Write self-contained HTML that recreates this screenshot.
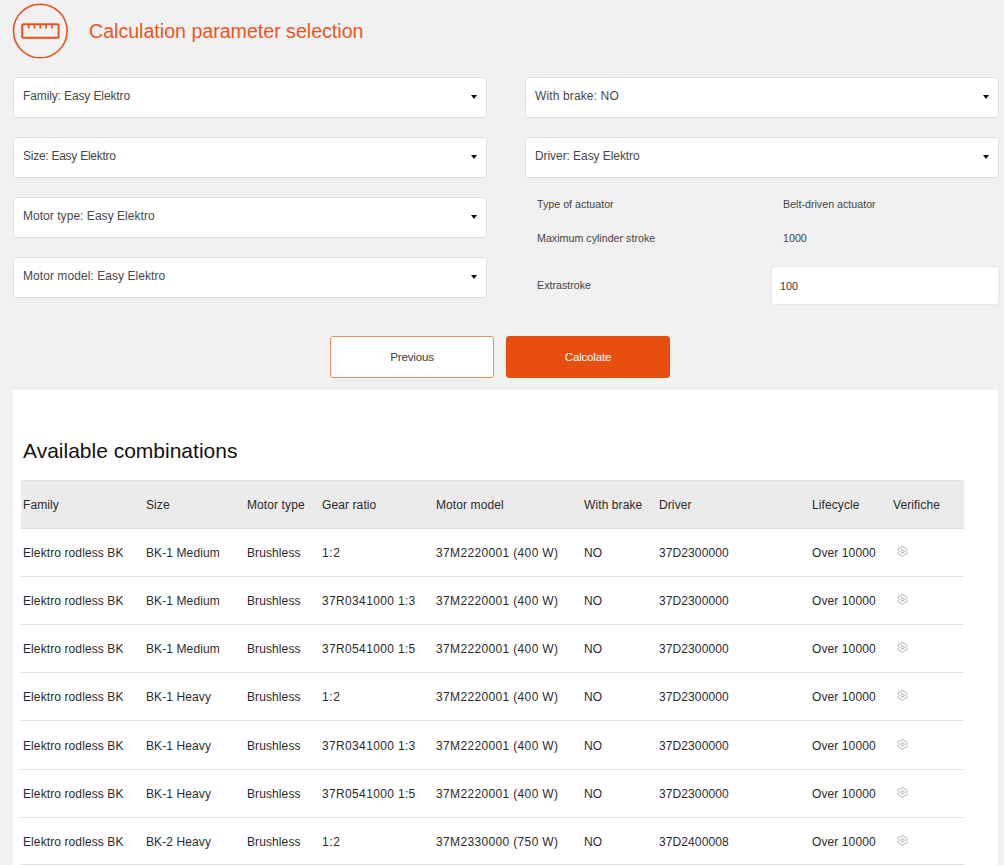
<!DOCTYPE html>
<html><head><meta charset="utf-8"><title>Calculation parameter selection</title>
<style>
*{box-sizing:border-box}
html,body{margin:0;padding:0}
body{width:1004px;height:865px;overflow:hidden;background:#f1f1f1;font-family:"Liberation Sans",sans-serif;position:relative;color:#333}
.abs{position:absolute}
.title{position:absolute;left:89px;top:19px;font-size:19.6px;line-height:24px;color:#e8561f;white-space:nowrap}
.sel{position:absolute;width:474px;height:41px;background:#fff;border:1px solid #dcdfe3;border-radius:3px}
.sel .t{position:absolute;left:9px;top:11px;font-size:12px;line-height:15px;color:#474747;white-space:nowrap;letter-spacing:-0.12px}
.sel .arr{position:absolute;right:9px;top:17px;width:0;height:0;border-left:3px solid transparent;border-right:3px solid transparent;border-top:4px solid #111}
.lbl{position:absolute;font-size:10.7px;line-height:13px;color:#444;white-space:nowrap}
.inp{position:absolute;left:771px;top:266px;width:228px;height:39px;background:#fff;border:1px solid #e6e8ea;border-radius:3px}
.inp .t{position:absolute;left:8px;top:13px;font-size:10.7px;line-height:13px;color:#333}
.btn{position:absolute;top:336px;width:164px;height:42px;border-radius:3px;font-size:11.6px;line-height:14px;text-align:center;padding-top:13px;letter-spacing:-0.2px}
.prev{left:330px;background:#fff;border:1px solid #ef8d66;color:#3a3a3a}
.calc{left:506px;background:#e84e0f;border:1px solid #e84e0f;color:#fff}
.panel{position:absolute;left:13px;top:390px;width:985px;height:500px;background:#fff}
.h2{position:absolute;left:23px;top:438px;font-size:21px;line-height:26px;color:#111;white-space:nowrap}
.thead{position:absolute;left:21px;top:480px;width:943px;height:49px;background:#ebebeb;border-top:1px solid #e2e2e2;border-bottom:1px solid #dedede}
.row{position:absolute;left:21px;width:943px;height:48px;border-bottom:1px solid #e2e2e2}
.c{position:absolute;font-size:12px;line-height:15px;color:#2a2a2a;white-space:nowrap;letter-spacing:0.1px}
.gear{position:absolute}
</style></head><body>

<svg class="abs" style="left:0;top:0" width="80" height="64" viewBox="0 0 80 64">
<circle cx="40.3" cy="31" r="26.8" fill="none" stroke="#e8521a" stroke-width="1.6"/>
<rect x="22.2" y="24.2" width="36.4" height="13.6" rx="1" fill="none" stroke="#e8521a" stroke-width="2"/>
<path d="M28.7 24v4.4M34.4 24v4.4M40.2 24v4.4M46 24v4.4M51.8 24v4.4" stroke="#e8521a" stroke-width="1.6"/>
</svg>
<div class="title">Calculation parameter selection</div>
<div class="sel" style="left:13px;top:77px"><span class="t" style="letter-spacing:-0.12px">Family: Easy Elektro</span><span class="arr"></span></div>
<div class="sel" style="left:13px;top:137px"><span class="t" style="letter-spacing:-0.26px">Size: Easy Elektro</span><span class="arr"></span></div>
<div class="sel" style="left:13px;top:197px"><span class="t" style="letter-spacing:0.04px">Motor type: Easy Elektro</span><span class="arr"></span></div>
<div class="sel" style="left:13px;top:257px"><span class="t" style="letter-spacing:0.06px">Motor model: Easy Elektro</span><span class="arr"></span></div>
<div class="sel" style="left:525px;top:77px"><span class="t" style="letter-spacing:0.13px">With brake: NO</span><span class="arr"></span></div>
<div class="sel" style="left:525px;top:137px"><span class="t" style="letter-spacing:-0.07px">Driver: Easy Elektro</span><span class="arr"></span></div>
<div class="lbl" style="left:537px;top:198px">Type of actuator</div>
<div class="lbl" style="left:783px;top:198px">Belt-driven actuator</div>
<div class="lbl" style="left:537px;top:232px">Maximum cylinder stroke</div>
<div class="lbl" style="left:783px;top:232px">1000</div>
<div class="lbl" style="left:537px;top:279px">Extrastroke</div>
<div class="inp"><span class="t">100</span></div>
<div class="btn prev">Previous</div>
<div class="btn calc">Calcolate</div>
<div class="panel"></div>
<div class="h2">Available combinations</div>
<div class="thead"></div>
<div class="c" style="left:23px;top:498px">Family</div>
<div class="c" style="left:146px;top:498px">Size</div>
<div class="c" style="left:247px;top:498px">Motor type</div>
<div class="c" style="left:322px;top:498px">Gear ratio</div>
<div class="c" style="left:436px;top:498px">Motor model</div>
<div class="c" style="left:584px;top:498px">With brake</div>
<div class="c" style="left:659px;top:498px">Driver</div>
<div class="c" style="left:812px;top:498px">Lifecycle</div>
<div class="c" style="left:893px;top:498px">Verifiche</div>
<div class="row" style="top:529px"></div>
<div class="c" style="left:23px;top:546px">Elektro rodless BK</div>
<div class="c" style="left:146px;top:546px">BK-1 Medium</div>
<div class="c" style="left:247px;top:546px">Brushless</div>
<div class="c" style="left:322px;top:546px;letter-spacing:0.6px">1:2</div>
<div class="c" style="left:436px;top:546px;letter-spacing:0.35px">37M2220001 (400 W)</div>
<div class="c" style="left:584px;top:546px">NO</div>
<div class="c" style="left:659px;top:546px">37D2300000</div>
<div class="c" style="left:812px;top:546px">Over 10000</div>
<div class="gear" style="left:896px;top:544px"><svg width="13" height="13" viewBox="-1 -0.85 13 13"><path fill="none" stroke="#a8a8a8" stroke-width="1" d="M9.35 5.50L9.35 5.25L9.38 4.99L9.49 4.71L9.80 4.35L10.07 3.95L10.11 3.59L10.02 3.27L9.87 2.98L9.69 2.70L9.46 2.46L9.13 2.32L8.65 2.35L8.18 2.44L7.88 2.40L7.64 2.29L7.43 2.17L7.21 2.04L7.00 1.89L6.81 1.64L6.65 1.20L6.44 0.76L6.15 0.55L5.83 0.47L5.50 0.45L5.17 0.47L4.85 0.55L4.56 0.76L4.35 1.20L4.19 1.64L4.00 1.89L3.79 2.04L3.58 2.17L3.36 2.29L3.12 2.40L2.82 2.44L2.35 2.35L1.87 2.32L1.54 2.46L1.31 2.70L1.13 2.98L0.98 3.27L0.89 3.59L0.93 3.95L1.20 4.35L1.51 4.71L1.62 4.99L1.65 5.25L1.65 5.50L1.65 5.75L1.62 6.01L1.51 6.29L1.20 6.65L0.93 7.05L0.89 7.41L0.98 7.73L1.13 8.02L1.31 8.30L1.54 8.54L1.87 8.68L2.35 8.65L2.82 8.56L3.12 8.60L3.36 8.71L3.57 8.83L3.79 8.96L4.00 9.11L4.19 9.36L4.35 9.80L4.56 10.24L4.85 10.45L5.17 10.53L5.50 10.55L5.83 10.53L6.15 10.45L6.44 10.24L6.65 9.80L6.81 9.36L7.00 9.11L7.21 8.96L7.43 8.83L7.64 8.71L7.88 8.60L8.18 8.56L8.65 8.65L9.13 8.68L9.46 8.54L9.69 8.30L9.87 8.03L10.02 7.73L10.11 7.41L10.07 7.05L9.80 6.65L9.49 6.29L9.38 6.01L9.35 5.75Z"/><circle cx="5.5" cy="5.5" r="1.6" fill="none" stroke="#a8a8a8" stroke-width="1"/></svg></div>
<div class="row" style="top:577px"></div>
<div class="c" style="left:23px;top:594px">Elektro rodless BK</div>
<div class="c" style="left:146px;top:594px">BK-1 Medium</div>
<div class="c" style="left:247px;top:594px">Brushless</div>
<div class="c" style="left:322px;top:594px;letter-spacing:0.35px">37R0341000 1:3</div>
<div class="c" style="left:436px;top:594px;letter-spacing:0.35px">37M2220001 (400 W)</div>
<div class="c" style="left:584px;top:594px">NO</div>
<div class="c" style="left:659px;top:594px">37D2300000</div>
<div class="c" style="left:812px;top:594px">Over 10000</div>
<div class="gear" style="left:896px;top:592px"><svg width="13" height="13" viewBox="-1 -0.85 13 13"><path fill="none" stroke="#a8a8a8" stroke-width="1" d="M9.35 5.50L9.35 5.25L9.38 4.99L9.49 4.71L9.80 4.35L10.07 3.95L10.11 3.59L10.02 3.27L9.87 2.98L9.69 2.70L9.46 2.46L9.13 2.32L8.65 2.35L8.18 2.44L7.88 2.40L7.64 2.29L7.43 2.17L7.21 2.04L7.00 1.89L6.81 1.64L6.65 1.20L6.44 0.76L6.15 0.55L5.83 0.47L5.50 0.45L5.17 0.47L4.85 0.55L4.56 0.76L4.35 1.20L4.19 1.64L4.00 1.89L3.79 2.04L3.58 2.17L3.36 2.29L3.12 2.40L2.82 2.44L2.35 2.35L1.87 2.32L1.54 2.46L1.31 2.70L1.13 2.98L0.98 3.27L0.89 3.59L0.93 3.95L1.20 4.35L1.51 4.71L1.62 4.99L1.65 5.25L1.65 5.50L1.65 5.75L1.62 6.01L1.51 6.29L1.20 6.65L0.93 7.05L0.89 7.41L0.98 7.73L1.13 8.02L1.31 8.30L1.54 8.54L1.87 8.68L2.35 8.65L2.82 8.56L3.12 8.60L3.36 8.71L3.57 8.83L3.79 8.96L4.00 9.11L4.19 9.36L4.35 9.80L4.56 10.24L4.85 10.45L5.17 10.53L5.50 10.55L5.83 10.53L6.15 10.45L6.44 10.24L6.65 9.80L6.81 9.36L7.00 9.11L7.21 8.96L7.43 8.83L7.64 8.71L7.88 8.60L8.18 8.56L8.65 8.65L9.13 8.68L9.46 8.54L9.69 8.30L9.87 8.03L10.02 7.73L10.11 7.41L10.07 7.05L9.80 6.65L9.49 6.29L9.38 6.01L9.35 5.75Z"/><circle cx="5.5" cy="5.5" r="1.6" fill="none" stroke="#a8a8a8" stroke-width="1"/></svg></div>
<div class="row" style="top:625px"></div>
<div class="c" style="left:23px;top:642px">Elektro rodless BK</div>
<div class="c" style="left:146px;top:642px">BK-1 Medium</div>
<div class="c" style="left:247px;top:642px">Brushless</div>
<div class="c" style="left:322px;top:642px;letter-spacing:0.35px">37R0541000 1:5</div>
<div class="c" style="left:436px;top:642px;letter-spacing:0.35px">37M2220001 (400 W)</div>
<div class="c" style="left:584px;top:642px">NO</div>
<div class="c" style="left:659px;top:642px">37D2300000</div>
<div class="c" style="left:812px;top:642px">Over 10000</div>
<div class="gear" style="left:896px;top:640px"><svg width="13" height="13" viewBox="-1 -0.85 13 13"><path fill="none" stroke="#a8a8a8" stroke-width="1" d="M9.35 5.50L9.35 5.25L9.38 4.99L9.49 4.71L9.80 4.35L10.07 3.95L10.11 3.59L10.02 3.27L9.87 2.98L9.69 2.70L9.46 2.46L9.13 2.32L8.65 2.35L8.18 2.44L7.88 2.40L7.64 2.29L7.43 2.17L7.21 2.04L7.00 1.89L6.81 1.64L6.65 1.20L6.44 0.76L6.15 0.55L5.83 0.47L5.50 0.45L5.17 0.47L4.85 0.55L4.56 0.76L4.35 1.20L4.19 1.64L4.00 1.89L3.79 2.04L3.58 2.17L3.36 2.29L3.12 2.40L2.82 2.44L2.35 2.35L1.87 2.32L1.54 2.46L1.31 2.70L1.13 2.98L0.98 3.27L0.89 3.59L0.93 3.95L1.20 4.35L1.51 4.71L1.62 4.99L1.65 5.25L1.65 5.50L1.65 5.75L1.62 6.01L1.51 6.29L1.20 6.65L0.93 7.05L0.89 7.41L0.98 7.73L1.13 8.02L1.31 8.30L1.54 8.54L1.87 8.68L2.35 8.65L2.82 8.56L3.12 8.60L3.36 8.71L3.57 8.83L3.79 8.96L4.00 9.11L4.19 9.36L4.35 9.80L4.56 10.24L4.85 10.45L5.17 10.53L5.50 10.55L5.83 10.53L6.15 10.45L6.44 10.24L6.65 9.80L6.81 9.36L7.00 9.11L7.21 8.96L7.43 8.83L7.64 8.71L7.88 8.60L8.18 8.56L8.65 8.65L9.13 8.68L9.46 8.54L9.69 8.30L9.87 8.03L10.02 7.73L10.11 7.41L10.07 7.05L9.80 6.65L9.49 6.29L9.38 6.01L9.35 5.75Z"/><circle cx="5.5" cy="5.5" r="1.6" fill="none" stroke="#a8a8a8" stroke-width="1"/></svg></div>
<div class="row" style="top:673px"></div>
<div class="c" style="left:23px;top:690px">Elektro rodless BK</div>
<div class="c" style="left:146px;top:690px">BK-1 Heavy</div>
<div class="c" style="left:247px;top:690px">Brushless</div>
<div class="c" style="left:322px;top:690px;letter-spacing:0.6px">1:2</div>
<div class="c" style="left:436px;top:690px;letter-spacing:0.35px">37M2220001 (400 W)</div>
<div class="c" style="left:584px;top:690px">NO</div>
<div class="c" style="left:659px;top:690px">37D2300000</div>
<div class="c" style="left:812px;top:690px">Over 10000</div>
<div class="gear" style="left:896px;top:688px"><svg width="13" height="13" viewBox="-1 -0.85 13 13"><path fill="none" stroke="#a8a8a8" stroke-width="1" d="M9.35 5.50L9.35 5.25L9.38 4.99L9.49 4.71L9.80 4.35L10.07 3.95L10.11 3.59L10.02 3.27L9.87 2.98L9.69 2.70L9.46 2.46L9.13 2.32L8.65 2.35L8.18 2.44L7.88 2.40L7.64 2.29L7.43 2.17L7.21 2.04L7.00 1.89L6.81 1.64L6.65 1.20L6.44 0.76L6.15 0.55L5.83 0.47L5.50 0.45L5.17 0.47L4.85 0.55L4.56 0.76L4.35 1.20L4.19 1.64L4.00 1.89L3.79 2.04L3.58 2.17L3.36 2.29L3.12 2.40L2.82 2.44L2.35 2.35L1.87 2.32L1.54 2.46L1.31 2.70L1.13 2.98L0.98 3.27L0.89 3.59L0.93 3.95L1.20 4.35L1.51 4.71L1.62 4.99L1.65 5.25L1.65 5.50L1.65 5.75L1.62 6.01L1.51 6.29L1.20 6.65L0.93 7.05L0.89 7.41L0.98 7.73L1.13 8.02L1.31 8.30L1.54 8.54L1.87 8.68L2.35 8.65L2.82 8.56L3.12 8.60L3.36 8.71L3.57 8.83L3.79 8.96L4.00 9.11L4.19 9.36L4.35 9.80L4.56 10.24L4.85 10.45L5.17 10.53L5.50 10.55L5.83 10.53L6.15 10.45L6.44 10.24L6.65 9.80L6.81 9.36L7.00 9.11L7.21 8.96L7.43 8.83L7.64 8.71L7.88 8.60L8.18 8.56L8.65 8.65L9.13 8.68L9.46 8.54L9.69 8.30L9.87 8.03L10.02 7.73L10.11 7.41L10.07 7.05L9.80 6.65L9.49 6.29L9.38 6.01L9.35 5.75Z"/><circle cx="5.5" cy="5.5" r="1.6" fill="none" stroke="#a8a8a8" stroke-width="1"/></svg></div>
<div class="row" style="top:722px"></div>
<div class="c" style="left:23px;top:739px">Elektro rodless BK</div>
<div class="c" style="left:146px;top:739px">BK-1 Heavy</div>
<div class="c" style="left:247px;top:739px">Brushless</div>
<div class="c" style="left:322px;top:739px;letter-spacing:0.35px">37R0341000 1:3</div>
<div class="c" style="left:436px;top:739px;letter-spacing:0.35px">37M2220001 (400 W)</div>
<div class="c" style="left:584px;top:739px">NO</div>
<div class="c" style="left:659px;top:739px">37D2300000</div>
<div class="c" style="left:812px;top:739px">Over 10000</div>
<div class="gear" style="left:896px;top:737px"><svg width="13" height="13" viewBox="-1 -0.85 13 13"><path fill="none" stroke="#a8a8a8" stroke-width="1" d="M9.35 5.50L9.35 5.25L9.38 4.99L9.49 4.71L9.80 4.35L10.07 3.95L10.11 3.59L10.02 3.27L9.87 2.98L9.69 2.70L9.46 2.46L9.13 2.32L8.65 2.35L8.18 2.44L7.88 2.40L7.64 2.29L7.43 2.17L7.21 2.04L7.00 1.89L6.81 1.64L6.65 1.20L6.44 0.76L6.15 0.55L5.83 0.47L5.50 0.45L5.17 0.47L4.85 0.55L4.56 0.76L4.35 1.20L4.19 1.64L4.00 1.89L3.79 2.04L3.58 2.17L3.36 2.29L3.12 2.40L2.82 2.44L2.35 2.35L1.87 2.32L1.54 2.46L1.31 2.70L1.13 2.98L0.98 3.27L0.89 3.59L0.93 3.95L1.20 4.35L1.51 4.71L1.62 4.99L1.65 5.25L1.65 5.50L1.65 5.75L1.62 6.01L1.51 6.29L1.20 6.65L0.93 7.05L0.89 7.41L0.98 7.73L1.13 8.02L1.31 8.30L1.54 8.54L1.87 8.68L2.35 8.65L2.82 8.56L3.12 8.60L3.36 8.71L3.57 8.83L3.79 8.96L4.00 9.11L4.19 9.36L4.35 9.80L4.56 10.24L4.85 10.45L5.17 10.53L5.50 10.55L5.83 10.53L6.15 10.45L6.44 10.24L6.65 9.80L6.81 9.36L7.00 9.11L7.21 8.96L7.43 8.83L7.64 8.71L7.88 8.60L8.18 8.56L8.65 8.65L9.13 8.68L9.46 8.54L9.69 8.30L9.87 8.03L10.02 7.73L10.11 7.41L10.07 7.05L9.80 6.65L9.49 6.29L9.38 6.01L9.35 5.75Z"/><circle cx="5.5" cy="5.5" r="1.6" fill="none" stroke="#a8a8a8" stroke-width="1"/></svg></div>
<div class="row" style="top:770px"></div>
<div class="c" style="left:23px;top:787px">Elektro rodless BK</div>
<div class="c" style="left:146px;top:787px">BK-1 Heavy</div>
<div class="c" style="left:247px;top:787px">Brushless</div>
<div class="c" style="left:322px;top:787px;letter-spacing:0.35px">37R0541000 1:5</div>
<div class="c" style="left:436px;top:787px;letter-spacing:0.35px">37M2220001 (400 W)</div>
<div class="c" style="left:584px;top:787px">NO</div>
<div class="c" style="left:659px;top:787px">37D2300000</div>
<div class="c" style="left:812px;top:787px">Over 10000</div>
<div class="gear" style="left:896px;top:785px"><svg width="13" height="13" viewBox="-1 -0.85 13 13"><path fill="none" stroke="#a8a8a8" stroke-width="1" d="M9.35 5.50L9.35 5.25L9.38 4.99L9.49 4.71L9.80 4.35L10.07 3.95L10.11 3.59L10.02 3.27L9.87 2.98L9.69 2.70L9.46 2.46L9.13 2.32L8.65 2.35L8.18 2.44L7.88 2.40L7.64 2.29L7.43 2.17L7.21 2.04L7.00 1.89L6.81 1.64L6.65 1.20L6.44 0.76L6.15 0.55L5.83 0.47L5.50 0.45L5.17 0.47L4.85 0.55L4.56 0.76L4.35 1.20L4.19 1.64L4.00 1.89L3.79 2.04L3.58 2.17L3.36 2.29L3.12 2.40L2.82 2.44L2.35 2.35L1.87 2.32L1.54 2.46L1.31 2.70L1.13 2.98L0.98 3.27L0.89 3.59L0.93 3.95L1.20 4.35L1.51 4.71L1.62 4.99L1.65 5.25L1.65 5.50L1.65 5.75L1.62 6.01L1.51 6.29L1.20 6.65L0.93 7.05L0.89 7.41L0.98 7.73L1.13 8.02L1.31 8.30L1.54 8.54L1.87 8.68L2.35 8.65L2.82 8.56L3.12 8.60L3.36 8.71L3.57 8.83L3.79 8.96L4.00 9.11L4.19 9.36L4.35 9.80L4.56 10.24L4.85 10.45L5.17 10.53L5.50 10.55L5.83 10.53L6.15 10.45L6.44 10.24L6.65 9.80L6.81 9.36L7.00 9.11L7.21 8.96L7.43 8.83L7.64 8.71L7.88 8.60L8.18 8.56L8.65 8.65L9.13 8.68L9.46 8.54L9.69 8.30L9.87 8.03L10.02 7.73L10.11 7.41L10.07 7.05L9.80 6.65L9.49 6.29L9.38 6.01L9.35 5.75Z"/><circle cx="5.5" cy="5.5" r="1.6" fill="none" stroke="#a8a8a8" stroke-width="1"/></svg></div>
<div class="row" style="top:817px"></div>
<div class="c" style="left:23px;top:835px">Elektro rodless BK</div>
<div class="c" style="left:146px;top:835px">BK-2 Heavy</div>
<div class="c" style="left:247px;top:835px">Brushless</div>
<div class="c" style="left:322px;top:835px;letter-spacing:0.6px">1:2</div>
<div class="c" style="left:436px;top:835px;letter-spacing:0.35px">37M2330000 (750 W)</div>
<div class="c" style="left:584px;top:835px">NO</div>
<div class="c" style="left:659px;top:835px">37D2400008</div>
<div class="c" style="left:812px;top:835px">Over 10000</div>
<div class="gear" style="left:896px;top:833px"><svg width="13" height="13" viewBox="-1 -0.85 13 13"><path fill="none" stroke="#a8a8a8" stroke-width="1" d="M9.35 5.50L9.35 5.25L9.38 4.99L9.49 4.71L9.80 4.35L10.07 3.95L10.11 3.59L10.02 3.27L9.87 2.98L9.69 2.70L9.46 2.46L9.13 2.32L8.65 2.35L8.18 2.44L7.88 2.40L7.64 2.29L7.43 2.17L7.21 2.04L7.00 1.89L6.81 1.64L6.65 1.20L6.44 0.76L6.15 0.55L5.83 0.47L5.50 0.45L5.17 0.47L4.85 0.55L4.56 0.76L4.35 1.20L4.19 1.64L4.00 1.89L3.79 2.04L3.58 2.17L3.36 2.29L3.12 2.40L2.82 2.44L2.35 2.35L1.87 2.32L1.54 2.46L1.31 2.70L1.13 2.98L0.98 3.27L0.89 3.59L0.93 3.95L1.20 4.35L1.51 4.71L1.62 4.99L1.65 5.25L1.65 5.50L1.65 5.75L1.62 6.01L1.51 6.29L1.20 6.65L0.93 7.05L0.89 7.41L0.98 7.73L1.13 8.02L1.31 8.30L1.54 8.54L1.87 8.68L2.35 8.65L2.82 8.56L3.12 8.60L3.36 8.71L3.57 8.83L3.79 8.96L4.00 9.11L4.19 9.36L4.35 9.80L4.56 10.24L4.85 10.45L5.17 10.53L5.50 10.55L5.83 10.53L6.15 10.45L6.44 10.24L6.65 9.80L6.81 9.36L7.00 9.11L7.21 8.96L7.43 8.83L7.64 8.71L7.88 8.60L8.18 8.56L8.65 8.65L9.13 8.68L9.46 8.54L9.69 8.30L9.87 8.03L10.02 7.73L10.11 7.41L10.07 7.05L9.80 6.65L9.49 6.29L9.38 6.01L9.35 5.75Z"/><circle cx="5.5" cy="5.5" r="1.6" fill="none" stroke="#a8a8a8" stroke-width="1"/></svg></div>
</body></html>
